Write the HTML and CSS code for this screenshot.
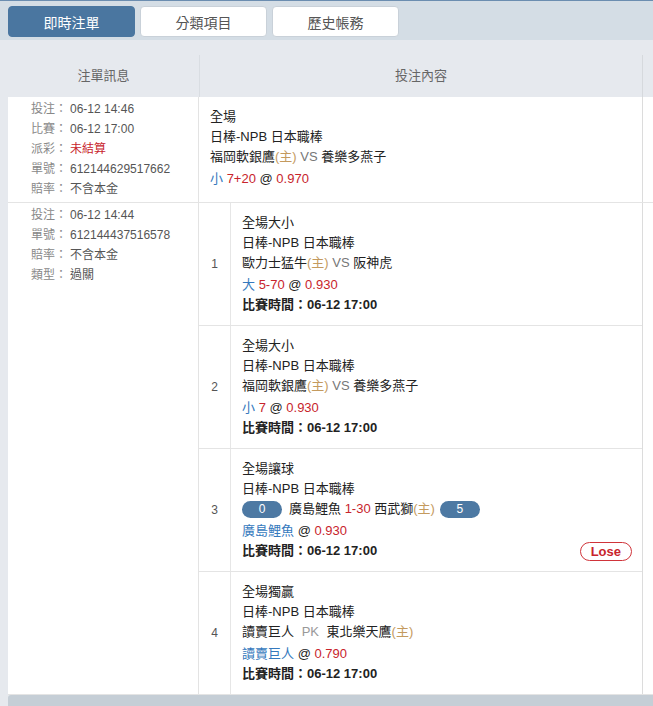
FILE: index.html
```html
<!DOCTYPE html>
<html lang="zh-Hant">

<head>
    <meta charset="utf-8">
    <title>即時注單</title>
    <link rel="stylesheet" href="styles.css">
</head>

<body>
    <div class="topbar">
        <button class="tab active">即時注單</button>
        <button class="tab">分類項目</button>
        <button class="tab">歷史帳務</button>
    </div>

    <div class="panel">
        <div class="thead">
            <div class="th">注單訊息</div>
            <div class="th th-main">投注內容</div>
            <div class="th"></div>
        </div>

        <!-- single bet -->
        <div class="row">
            <div class="info">
                <div><span class="lbl">投注：</span>06-12 14:46</div>
                <div><span class="lbl">比賽：</span>06-12 17:00</div>
                <div><span class="lbl">派彩：</span><span class="red">未結算</span></div>
                <div><span class="lbl">單號：</span>612144629517662</div>
                <div><span class="lbl">賠率：</span>不含本金</div>
            </div>
            <div class="content single">
                <div class="line">全場</div>
                <div class="line">日棒-NPB 日本職棒</div>
                <div class="line">福岡軟銀鷹<span class="home">(主)</span> <span class="vs">VS</span> 養樂多燕子</div>
                <div class="line odds"><span class="blue">小</span> <span class="red">7+20</span> @ <span class="red">0.970</span></div>
            </div>
            <div class="extra"></div>
        </div>

        <!-- parlay -->
        <div class="row">
            <div class="info">
                <div><span class="lbl">投注：</span>06-12 14:44</div>
                <div><span class="lbl">單號：</span>612144437516578</div>
                <div><span class="lbl">賠率：</span>不含本金</div>
                <div><span class="lbl">類型：</span>過關</div>
            </div>
            <div class="content">
                <div class="sub">
                    <div class="num">1</div>
                    <div class="detail">
                        <div class="line">全場大小</div>
                        <div class="line">日棒-NPB 日本職棒</div>
                        <div class="line">歐力士猛牛<span class="home">(主)</span> <span class="vs">VS</span> 阪神虎</div>
                        <div class="line odds"><span class="blue">大</span> <span class="red">5-70</span> @ <span class="red">0.930</span></div>
                        <div class="line time">比賽時間：06-12 17:00</div>
                    </div>
                </div>
                <div class="sub">
                    <div class="num">2</div>
                    <div class="detail">
                        <div class="line">全場大小</div>
                        <div class="line">日棒-NPB 日本職棒</div>
                        <div class="line">福岡軟銀鷹<span class="home">(主)</span> <span class="vs">VS</span> 養樂多燕子</div>
                        <div class="line odds"><span class="blue">小</span> <span class="red">7</span> @ <span class="red">0.930</span></div>
                        <div class="line time">比賽時間：06-12 17:00</div>
                    </div>
                </div>
                <div class="sub">
                    <div class="num">3</div>
                    <div class="detail">
                        <div class="line">全場讓球</div>
                        <div class="line">日棒-NPB 日本職棒</div>
                        <div class="line"><span class="pill">0</span>廣島鯉魚 <span class="red">1-30</span> 西武獅<span class="home">(主)</span><span class="pill pill-r">5</span></div>
                        <div class="line odds"><span class="blue">廣島鯉魚</span> @ <span class="red">0.930</span></div>
                        <div class="line time">比賽時間：06-12 17:00<span class="lose">Lose</span></div>
                    </div>
                </div>
                <div class="sub">
                    <div class="num">4</div>
                    <div class="detail">
                        <div class="line">全場獨贏</div>
                        <div class="line">日棒-NPB 日本職棒</div>
                        <div class="line">讀賣巨人 <span class="vs pk">PK</span> 東北樂天鷹<span class="home">(主)</span></div>
                        <div class="line odds"><span class="blue">讀賣巨人</span> @ <span class="red">0.790</span></div>
                        <div class="line time">比賽時間：06-12 17:00</div>
                    </div>
                </div>
            </div>
            <div class="extra"></div>
        </div>

        <div class="footer"></div>
    </div>
</body>

</html>
```

FILE: styles.css
```css
body {
    margin: 0;
    font-family: "Liberation Sans", "Noto Sans CJK TC", sans-serif;
    font-size: 13px;
    color: #222;
    background-color: #e6e9ee;
    overflow: hidden;
}

.topbar {
    display: flex;
    gap: 5px;
    height: 40px;
    padding: 5px 8px 0 8px;
    box-sizing: border-box;
    background-color: #d4dde5;
    border-top: 1px solid #6b8db0;
}

.tab {
    width: 127px;
    height: 31px;
    border: 1px solid #c9d1d9;
    border-radius: 4px;
    background-color: #fff;
    color: #555;
    font-family: inherit;
    font-size: 14px;
}

.tab.active {
    background-color: #4a76a0;
    border-color: #4a76a0;
    color: #fff;
}

.panel {
    padding: 15px 0 0 8px;
}

.thead,
.row {
    display: grid;
    grid-template-columns: 191px 444px 1fr;
}

.th {
    height: 42px;
    line-height: 42px;
    text-align: center;
    color: #666;
}

.th-main {
    border-left: 1px solid #d9dde2;
    border-right: 1px solid #d6d9dd;
}

.row {
    background-color: #fff;
    border-bottom: 1px solid #e4e4e4;
}

.row:last-of-type {
    border-bottom: 0;
}

.info {
    padding: 2px 0 0 23px;
    border-right: 1px solid #e3e3e3;
    font-size: 12px;
    line-height: 20px;
    color: #555;
}

.lbl {
    display: inline-block;
    width: 39px;
    color: #888;
}

.content {
    border-right: 1px solid #dcdcdc;
}

.content.single {
    padding: 10px 12px 13px 11px;
}

.line {
    line-height: 20px;
}

.odds {
    padding-top: 2px;
}

.time {
    display: flex;
    align-items: center;
    font-weight: bold;
}

.sub {
    display: grid;
    grid-template-columns: 32px 1fr;
    border-bottom: 1px solid #e4e4e4;
}

.sub:last-child {
    border-bottom: 0;
}

.num {
    display: flex;
    align-items: center;
    justify-content: center;
    border-right: 1px solid #e6e6e6;
    color: #555;
    font-size: 12px;
}

.detail {
    padding: 10px 10px 10px 11px;
}

.home {
    color: #c49a5e;
}

.vs {
    color: #777;
}

.pk {
    color: #999;
    margin: 0 4px;
}

.red {
    color: #c8242c;
}

.blue {
    color: #3579bd;
}

.pill {
    display: inline-block;
    width: 40px;
    height: 17px;
    line-height: 17px;
    margin-right: 7px;
    border-radius: 9px;
    background-color: #4d79a3;
    color: #fff;
    font-size: 12px;
    text-align: center;
    vertical-align: middle;
}

.pill-r {
    margin: 0 0 0 5px;
}

.lose {
    margin-left: auto;
    padding: 0 10px;
    line-height: 17px;
    border: 1px solid #d0343a;
    border-radius: 10px;
    color: #c8242c;
    font-size: 13px;
}

.footer {
    height: 14px;
    background-color: #c5ced6;
    border-radius: 3px 0 0 0;
}
```
